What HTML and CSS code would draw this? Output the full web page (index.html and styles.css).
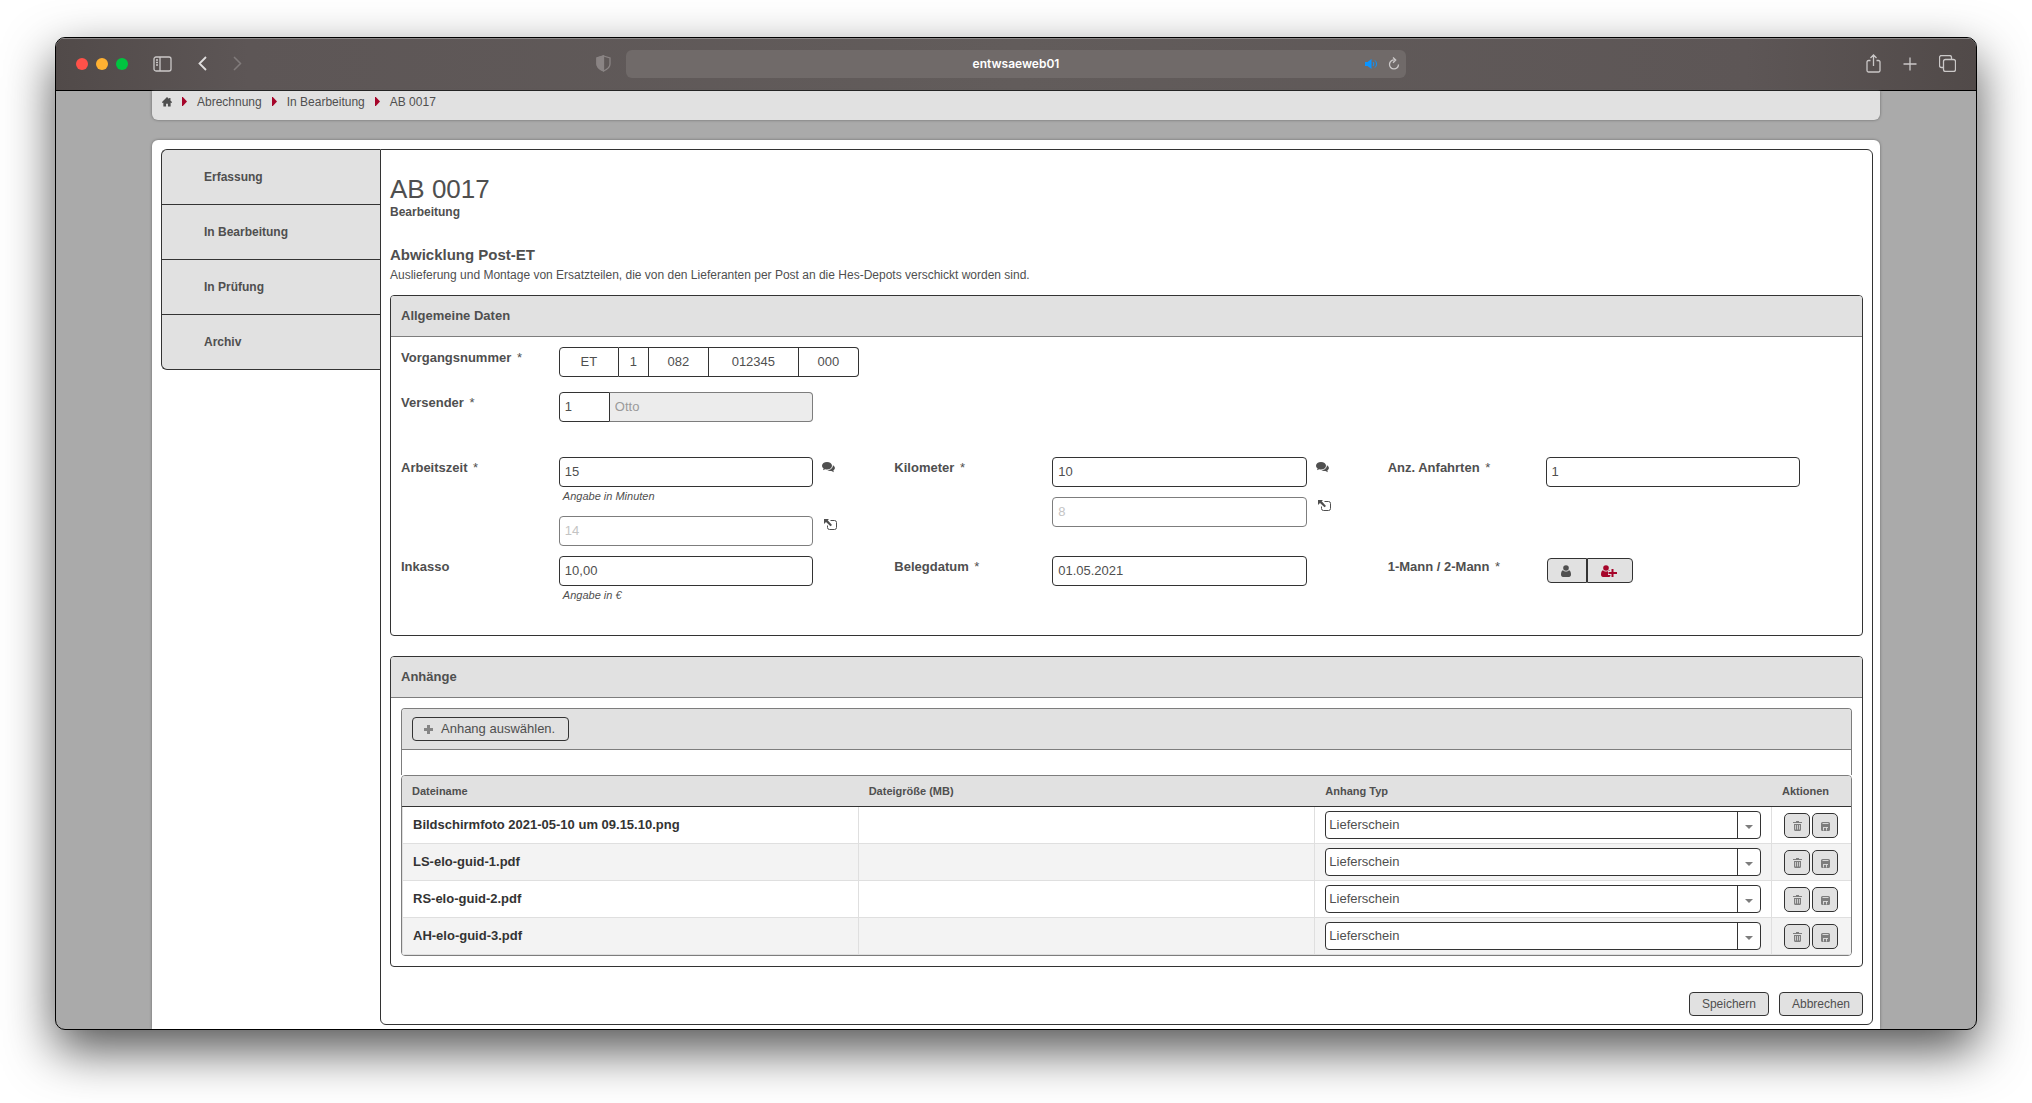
FILE: index.html
```html
<!DOCTYPE html>
<html lang="de">
<head>
<meta charset="utf-8">
<title>AB 0017 – Bearbeitung</title>
<link rel="stylesheet" href="styles.css">
</head>
<body>
<svg class="sprite" aria-hidden="true">
  <symbol id="i-comments" viewBox="0 0 13 11"><path d="M5 0C2.200 0 0 1.600 0 3.700c0 1.100.7 2.100 1.700 2.800L.9 8.300l2.300-1.100c.6.100 1.200.2 1.800.2 2.800 0 5-1.600 5-3.700S7.800 0 5 0z"/><path d="M10.900 3.200c.1 2.900-2.500 4.900-5.700 5.100.9.600 2.100.9 3.300.8l.9-.1L11.900 10.200 11.300 8.400c1-.6 1.600-1.400 1.600-2.400 0-1.100-.8-2.100-2-2.800z"/></symbol>
  <symbol id="i-transfer" viewBox="0 0 13 12"><path d="M0 0h5L3.700 1.300 8 6 6.500 7.300 2 3 0 5z"/><path d="M6.500 1.500H10.500a2 2 0 0 1 2 2v5a2 2 0 0 1-2 2h-5a2 2 0 0 1-2-2V6.500" fill="none" stroke="currentColor"/></symbol>
  <symbol id="i-user" viewBox="0 0 10 12"><circle cx="5" cy="3" r="2.800"/><path d="M2 5.200C.6 5.700 0 7.200 0 9.500 0 11 .8 12 2 12h6c1.200 0 2-1 2-2.500 0-2.300-.6-3.800-2-4.300C7.200 6.100 6.200 6.600 5 6.600S2.800 6.100 2 5.200z"/></symbol>
  <symbol id="i-trash" viewBox="0 0 9 10"><path d="M0 1h3V0h3v1h3v1H0zM1 3h7v5.500A1.500 1.500 0 0 1 6.500 10h-4A1.500 1.500 0 0 1 1 8.500z"/><path d="M2.500 4v4.500M4.500 4v4.500M6.500 4v4.500" stroke="#e1e1e1" stroke-width=".8"/></symbol>
  <symbol id="i-save" viewBox="0 0 9 9"><path d="M1.500 0h6A1.500 1.500 0 0 1 9 1.500v6A1.500 1.500 0 0 1 7.500 9h-6A1.500 1.500 0 0 1 0 7.500v-6A1.500 1.500 0 0 1 1.500 0z"/><path d="M1.500 1.500h6M2.500 5v3.500M3 5.500h4M5.500 5v3.500" fill="none" stroke="#e1e1e1" stroke-width=".9"/></symbol>
  <symbol id="i-crumb" viewBox="0 0 5 9"><path d="M0 0h.8L5 4.500.8 9H0z"/></symbol>
</svg>

<div class="window">
  <header class="toolbar">
    <div class="toolbar-side">
      <span class="light light-red"></span><span class="light light-yellow"></span><span class="light light-green"></span>
      <button class="tool tool-sidebar" aria-label="Seitenleiste"><svg width="19" height="16" viewBox="0 0 19 16"><rect x="1" y="1" width="17" height="14" rx="2"/><path d="M7 1v14M3 4h2M3 6.500h2M3 9h2"/></svg></button>
      <button class="tool tool-back" aria-label="Zurück"><svg width="9" height="15" viewBox="0 0 9 15"><path d="M8 1 1.500 7.500 8 14" stroke-width="1.800"/></svg></button>
      <button class="tool tool-forward" aria-label="Vorwärts"><svg width="9" height="15" viewBox="0 0 9 15"><path d="M1 1l6.500 6.500L1 14" stroke-width="1.500"/></svg></button>
      <button class="tool tool-shield" aria-label="Datenschutz"><svg width="15" height="17" viewBox="0 0 15 17"><path d="M7.500 1 14 3v6c0 3.500-3 5.500-6.500 7C4 14.500 1 12.500 1 9V3z"/><path d="M7.500 1v15C4 14.500 1 12.500 1 9V3z" fill="currentColor"/></svg></button>
    </div>
    <div class="address">
      <span class="address-text">entwsaeweb01</span>
      <svg class="speaker" width="13" height="10" viewBox="0 0 13 10"><path d="M0 3h2.500L6.500 0v10L2.500 7H0z" fill="currentColor"/><path d="M8 3c1 1.200 1 2.800 0 4M10 1.500c2 2 2 5 0 7" fill="none" stroke="currentColor"/></svg>
      <button class="tool" aria-label="Neu laden"><svg width="12" height="13" viewBox="0 0 12 13"><path d="M6.500 3A4.500 4.500 0 1 0 10.500 7.500M5 .5 7.700 3 5 5.700"/></svg></button>
    </div>
    <div class="toolbar-side toolbar-right">
      <button class="tool" aria-label="Teilen"><svg width="15" height="19" viewBox="0 0 15 19"><path d="M4.500 6.500H2.500a1.500 1.500 0 0 0-1.500 1.500v8.500A1.500 1.500 0 0 0 2.500 18h10a1.500 1.500 0 0 0 1.500-1.500V8a1.500 1.500 0 0 0-1.500-1.500h-2M7.500 12V1M4.500 4l3-3 3 3"/></svg></button>
      <button class="tool" aria-label="Neuer Tab"><svg width="14" height="14" viewBox="0 0 14 14"><path d="M7 .5v13M.5 7h13"/></svg></button>
      <button class="tool" aria-label="Tabübersicht"><svg width="17" height="17" viewBox="0 0 17 17"><rect x="4.500" y="4.500" width="12" height="12" rx="2"/><path d="M4.500 12.500h-2a2 2 0 0 1-2-2v-8a2 2 0 0 1 2-2h8a2 2 0 0 1 2 2v2"/></svg></button>
    </div>
  </header>

  <div class="page">
    <nav class="breadcrumb" aria-label="Pfad">
      <a href="#" aria-label="Startseite"><svg width="10" height="10" viewBox="0 0 11 11"><path d="M5.500 0 0 5.500v.8h1.500V10.500h3V7.500h2v3h3V6.300H11v-.8L9.300 3.800V1H7.800v1.300z"/></svg></a>
      <svg class="crumb-arrow" width="5" height="9"><use href="#i-crumb"/></svg>
      <a href="#">Abrechnung</a>
      <svg class="crumb-arrow" width="5" height="9"><use href="#i-crumb"/></svg>
      <a href="#">In Bearbeitung</a>
      <svg class="crumb-arrow" width="5" height="9"><use href="#i-crumb"/></svg>
      <span>AB 0017</span>
    </nav>

    <div class="panel">
      <nav class="tabs">
        <a href="#">Erfassung</a>
        <a href="#">In Bearbeitung</a>
        <a href="#">In Prüfung</a>
        <a href="#">Archiv</a>
      </nav>

      <main class="content">
        <h1>AB 0017</h1>
        <p class="status">Bearbeitung</p>
        <h2>Abwicklung Post-ET</h2>
        <p class="description">Auslieferung und Montage von Ersatzteilen, die von den Lieferanten per Post an die Hes-Depots verschickt worden sind.</p>

        <form>
        <section class="box">
          <h3>Allgemeine Daten</h3>
          <div class="form-body">
            <div class="field-row">
              <div class="field">
                <label for="vorgang">Vorgangsnummer <span>*</span></label>
                <div class="segments">
                  <input id="vorgang" class="seg-m" value="ET">
                  <input class="seg-s" value="1" aria-label="Vorgangsnummer Teil 2">
                  <input class="seg-m" value="082" aria-label="Vorgangsnummer Teil 3">
                  <input class="seg-l" value="012345" aria-label="Vorgangsnummer Teil 4">
                  <input class="seg-m" value="000" aria-label="Vorgangsnummer Teil 5">
                </div>
              </div>
            </div>
            <div class="field-row sender">
              <div class="field">
                <label for="versender">Versender <span>*</span></label>
                <div class="pair">
                  <input id="versender" class="pair-code" value="1">
                  <input class="pair-name" value="Otto" aria-label="Name des Versenders" disabled>
                </div>
              </div>
            </div>
            <div class="field-row">
              <div class="field">
                <label for="zeit">Arbeitszeit <span>*</span></label>
                <input id="zeit" class="text" value="15">
                <button type="button" class="icon-comment" aria-label="Kommentar"><svg width="13" height="11"><use href="#i-comments"/></svg></button>
                <small>Angabe in Minuten</small>
                <input class="text second" value="14" aria-label="Berechnete Arbeitszeit" disabled>
                <button type="button" class="icon-transfer second" aria-label="Übernehmen"><svg width="13" height="12"><use href="#i-transfer"/></svg></button>
              </div>
              <div class="field">
                <label for="km">Kilometer <span>*</span></label>
                <input id="km" class="text" value="10">
                <button type="button" class="icon-comment" aria-label="Kommentar"><svg width="13" height="11"><use href="#i-comments"/></svg></button>
                <input class="text second" value="8" aria-label="Berechnete Kilometer" disabled>
                <button type="button" class="icon-transfer second" aria-label="Übernehmen"><svg width="13" height="12"><use href="#i-transfer"/></svg></button>
              </div>
              <div class="field">
                <label for="anfahrten">Anz. Anfahrten <span>*</span></label>
                <input id="anfahrten" class="text" value="1">
              </div>
              <div class="field">
                <label for="inkasso">Inkasso</label>
                <input id="inkasso" class="text" value="10,00">
                <small>Angabe in €</small>
              </div>
              <div class="field">
                <label for="datum">Belegdatum <span>*</span></label>
                <input id="datum" class="text" value="01.05.2021">
              </div>
              <div class="field">
                <label for="mann">1-Mann / 2-Mann <span>*</span></label>
                <div class="toggle">
                  <button id="mann" type="button" aria-label="1-Mann"><svg width="10" height="12"><use href="#i-user"/></svg></button>
                  <button type="button" class="active" aria-label="2-Mann"><svg width="16" height="12" viewBox="0 0 16 12"><use href="#i-user" width="10" height="12"/><path d="M11.500 3.500v8.500M7 8h9" stroke="#e1e1e1" stroke-width="4"/><path d="M11.500 4v8M7.500 8H16" stroke="currentColor" stroke-width="2"/></svg></button>
                </div>
              </div>
            </div>
          </div>
        </section>

        <section class="box">
          <h3>Anhänge</h3>
          <div class="files">
            <div class="upload">
              <div class="upload-bar"><button type="button" class="add"><svg width="9" height="9" viewBox="0 0 9 9"><path d="M3 0h3v3h3v3H6v3H3V6H0V3h3z"/></svg>Anhang auswählen.</button></div>
            </div>
            <div class="table-wrap">
            <table>
              <thead><tr><th>Dateiname</th><th>Dateigröße (MB)</th><th>Anhang Typ</th><th class="col-actions">Aktionen</th></tr></thead>
              <tbody>
                <tr><td>Bildschirmfoto 2021-05-10 um 09.15.10.png</td><td></td>
                  <td><div class="select"><select aria-label="Anhang Typ"><option>Lieferschein</option></select><span></span></div></td>
                  <td><div class="actions"><button type="button" aria-label="Löschen"><svg width="9" height="10"><use href="#i-trash"/></svg></button><button type="button" aria-label="Speichern"><svg width="9" height="9"><use href="#i-save"/></svg></button></div></td></tr>
                <tr><td>LS-elo-guid-1.pdf</td><td></td>
                  <td><div class="select"><select aria-label="Anhang Typ"><option>Lieferschein</option></select><span></span></div></td>
                  <td><div class="actions"><button type="button" aria-label="Löschen"><svg width="9" height="10"><use href="#i-trash"/></svg></button><button type="button" aria-label="Speichern"><svg width="9" height="9"><use href="#i-save"/></svg></button></div></td></tr>
                <tr><td>RS-elo-guid-2.pdf</td><td></td>
                  <td><div class="select"><select aria-label="Anhang Typ"><option>Lieferschein</option></select><span></span></div></td>
                  <td><div class="actions"><button type="button" aria-label="Löschen"><svg width="9" height="10"><use href="#i-trash"/></svg></button><button type="button" aria-label="Speichern"><svg width="9" height="9"><use href="#i-save"/></svg></button></div></td></tr>
                <tr><td>AH-elo-guid-3.pdf</td><td></td>
                  <td><div class="select"><select aria-label="Anhang Typ"><option>Lieferschein</option></select><span></span></div></td>
                  <td><div class="actions"><button type="button" aria-label="Löschen"><svg width="9" height="10"><use href="#i-trash"/></svg></button><button type="button" aria-label="Speichern"><svg width="9" height="9"><use href="#i-save"/></svg></button></div></td></tr>
              </tbody>
            </table>
            </div>
          </div>
        </section>

        <div class="form-actions">
          <button type="button">Speichern</button>
          <button type="button">Abbrechen</button>
        </div>
        </form>
      </main>
    </div>
  </div>
</div>
</body>
</html>
```
FILE: styles.css
```css
:root {
  --text: #4f4f4f;
  --line: #333;
  --line-soft: #7d7d7d;
  --fill: #e1e1e1;
  --accent: #a6052a;
}

* { box-sizing: border-box; }

body {
  margin: 0;
  padding: 37px 55px 73px;
  background: #fff;
  color: var(--text);
  font: 12px/16px "Liberation Sans", Arial, sans-serif;
}

h1, h2, h3, p { margin: 0; }
button, input, select { font: inherit; color: inherit; margin: 0; }
button { padding: 0; border: 0; background: none; display: flex; align-items: center; justify-content: center; }
a { color: inherit; text-decoration: none; }
svg { fill: currentColor; display: block; }
.sprite { position: absolute; width: 0; height: 0; }

/* Browser window */
.window {
  border: 1px solid #000;
  border-radius: 10px;
  overflow: hidden;
  background: #aaa;
  box-shadow: 0 20px 50px rgba(0, 0, 0, .68);
}

.toolbar {
  display: flex;
  align-items: center;
  height: 53px;
  padding-bottom: 2px;
  border-top: 1px solid #8a8686;
  border-bottom: 1px solid #000;
  background: linear-gradient(90deg, #514a49, #5d5656 10%, #625c5b 50%, #5d5656 88%, #514a49);
  color: #cbc8c8;
}
.toolbar-side { flex: 1; display: flex; align-items: center; padding-left: 20px; }
.toolbar-right { justify-content: flex-end; gap: 22px; padding: 0 20px 0 0; }
.light { width: 12px; height: 12px; margin-right: 8px; border-radius: 50%; }
.light-red { background: #ff5149; }
.light-yellow { background: #ffb132; }
.light-green { background: #00c440; }
.tool svg { fill: none; stroke: currentColor; stroke-width: 1.3; }
.tool-sidebar { margin-left: 17px; }
.tool-back { margin-left: 26px; color: #e0dede; }
.tool-forward { margin-left: 26px; color: #817b7b; }
.tool-shield { margin: 0 15px 0 auto; color: #8a8484; }
.address {
  display: flex;
  align-items: center;
  gap: 10px;
  width: 40.6%;
  height: 28px;
  padding: 0 6px 0 51px;
  border-radius: 6px;
  background: #706a69;
}
.address-text { flex: 1; color: #fff; text-align: center; font: 600 12px/16px Inter, sans-serif; }
.speaker { color: #0a94ff; }

/* Page */
.page { width: 90%; margin: 0 auto; }
.breadcrumb {
  display: flex;
  align-items: center;
  gap: 10px;
  height: 29px;
  padding: 0 10px 8px;
  border-radius: 0 0 6px 6px;
  background: var(--fill);
  box-shadow: 0 0 3px #666;
}
.crumb-arrow { color: var(--accent); }

.panel {
  display: flex;
  align-items: flex-start;
  margin-top: 20px;
  padding: 9px 7px 4px 9px;
  border-radius: 6px 6px 0 0;
  background: #fff;
  box-shadow: 0 0 3px #666;
}
.tabs {
  flex: none;
  width: 219px;
  border: 1px solid var(--line);
  border-right: 0;
  border-radius: 6px 0 0 6px;
  background: var(--fill);
  font-weight: bold;
}
.tabs a { display: block; padding: 19px 42px; }
.tabs a + a { border-top: 1px solid var(--line); }

.content {
  flex: 1;
  min-width: 0;
  padding: 24px 9px 8px;
  border: 1px solid var(--line);
  border-radius: 0 6px 6px 6px;
}
h1 { font-size: 26px; line-height: 30px; font-weight: normal; }
.status { font-weight: bold; }
h2 { margin-top: 25px; font-size: 15px; line-height: 20px; }
.description { margin: 2px 0 12px; }

.box { margin-bottom: 20px; border: 1px solid var(--line); border-radius: 4px; overflow: hidden; }
.box h3 { padding: 10px; border-bottom: 1px solid var(--line-soft); background: var(--fill); font-size: 13px; line-height: 20px; }

/* Form */
.form-body { display: grid; gap: 15px; padding: 10px 10px 30px; font-size: 13px; line-height: 20px; }
.field-row { display: grid; grid-template-columns: repeat(3, minmax(0, 1fr)); gap: 10px 29px; }
.sender { margin-bottom: 20px; }
.field { display: grid; grid-template-columns: 34% minmax(0, 1fr) 52px; align-items: start; align-content: start; }
.field label { grid-column: 1; padding-top: 1px; font-weight: bold; white-space: nowrap; }
.field label span { margin-left: 2px; font-weight: normal; }
.field small { grid-column: 2; padding-left: 4px; font-size: 11px; line-height: 19px; font-style: italic; }
.text, .segments input, .pair input { height: 30px; padding: 0 5px 2px; border: 1px solid var(--line); background: #fff; }
.text { grid-column: 2; width: 100%; border-radius: 4px; }
.text:disabled { border-color: var(--line-soft); color: #c4c4c4; }
.second { margin-top: 10px; }

.segments { display: flex; width: max-content; }
.segments input { padding: 0 0 2px; border-left-width: 0; text-align: center; }
.segments input:first-child { border-left-width: 1px; border-radius: 4px 0 0 4px; }
.segments input:last-child { border-radius: 0 4px 4px 0; }
.segments .seg-s { width: 30px; }
.segments .seg-m { width: 60px; }
.segments .seg-l { width: 90px; }

.pair { display: flex; }
.pair .pair-code { width: 51px; border-radius: 4px 0 0 4px; }
.pair .pair-name { flex: 1; min-width: 0; border-color: var(--line-soft); border-left: 0; border-radius: 0 4px 4px 0; background: #ececec; color: #9a9a9a; }

.icon-comment, .icon-transfer { grid-column: 3; justify-self: start; }
.icon-comment { padding: 5px 0 0 9px; }
.icon-transfer { padding: 3px 0 0 11px; }

.toggle { display: flex; margin-top: 2px; padding-left: 1px; }
.toggle button { width: 40px; height: 25px; padding-right: 2px; border: 1px solid var(--line); border-radius: 4px 0 0 4px; background: var(--fill); }
.toggle .active { width: 46px; border-radius: 0 4px 4px 0; color: var(--accent); }

/* Attachments */
.files { padding: 10px; }
.upload { padding-bottom: 25px; border: 1px solid var(--line-soft); border-bottom: 0; border-radius: 4px 4px 0 0; overflow: hidden; }
.upload-bar { padding: 8px 10px; border-bottom: 1px solid var(--line-soft); background: var(--fill); }
.add { gap: 8px; height: 24px; padding: 0 13px 0 11px; border: 1px solid var(--line); border-radius: 4px; font-size: 13px; }
.add svg { color: #858585; }

.table-wrap { border: 1px solid var(--line-soft); border-radius: 4px; overflow: hidden; }
table { width: 100%; table-layout: fixed; border-spacing: 0; }
th { height: 31px; padding: 0 10px; border-bottom: 1px solid var(--line); background: var(--fill); font-size: 11px; text-align: left; }
th.col-actions { width: 79px; }
td { height: 37px; padding: 0 10px; border: solid #dfdfdf; border-width: 0 1px 1px 0; color: var(--line); font-size: 13px; font-weight: bold; }
td:first-child { border-left-width: 1px; }
td:last-child { border-right: 0; }
tr:nth-child(even) td { background: #f3f3f3; }

.select { position: relative; }
.select select { display: block; width: 100%; height: 28px; padding: 0 28px 0 3px; appearance: none; border: 1px solid var(--line); border-radius: 4px; background: #fff; color: var(--text); font-weight: normal; }
.select span { position: absolute; top: 1px; right: 1px; bottom: 1px; display: flex; align-items: center; width: 23px; padding: 4px 0 0 7px; border-left: 1px solid var(--line); pointer-events: none; }
.select span::after { content: ""; border: solid transparent; border-width: 4px 4px 0; border-top-color: #7d7d7d; }

.actions { display: flex; gap: 2px; padding-left: 2px; }
.actions button { width: 26px; height: 25px; padding-top: 2px; border: 1px solid var(--line); border-radius: 5px; background: var(--fill); color: #7d7d7d; }

.form-actions { display: flex; justify-content: flex-end; gap: 10px; margin-top: 25px; }
.form-actions button { height: 24px; padding: 0 12px; border: 1px solid var(--line); border-radius: 4px; background: var(--fill); }
```
